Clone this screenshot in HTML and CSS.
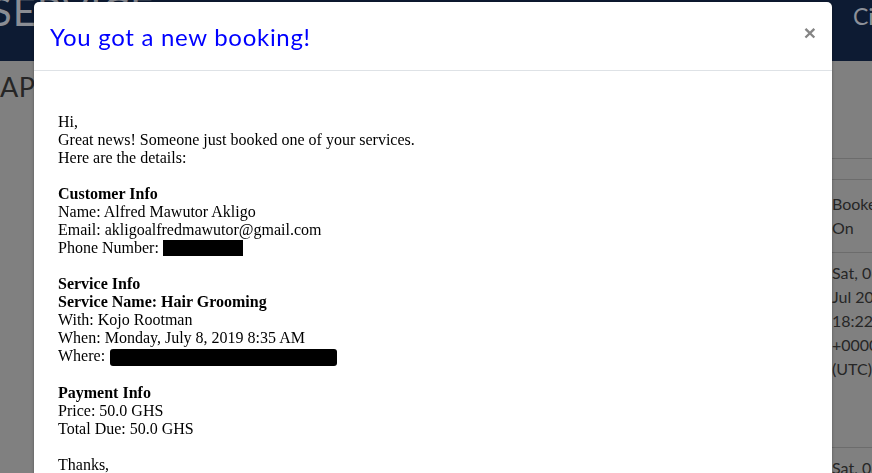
FILE: index.html
```html
<!DOCTYPE html>
<html lang="en">
<head>
<meta charset="utf-8">
<title>Bookings</title>
<link rel="stylesheet" href="styles.css">
</head>
<body>
<div class="page">
  <nav class="navbar">
    <span class="brand">SERVICE</span>
    <span class="nav-link">Cities</span>
  </nav>
  <div class="content">
    <div class="left">
      <h2 class="page-title">APPOINTMENTS</h2>
    </div>
    <div class="right">
      <div class="row row-empty"></div>
      <div class="row row-head">Booked On</div>
      <div class="row row-cell">Sat, 06 Jul 2019 18:22:10 +0000 (UTC)</div>
      <div class="row row-cell">Sat, 06 Jul 2019</div>
    </div>
  </div>
</div>

<div class="modal">
  <div class="modal-header">
    <h5 class="modal-title">You got a new booking!</h5>
    <span class="close">&times;</span>
  </div>
  <div class="modal-body">
    <div class="email">
      <p>Hi,<br>Great news! Someone just booked one of your services.<br>Here are the details:</p>
      <p><b>Customer Info</b><br>Name: Alfred Mawutor Akligo<br>Email: akligoalfredmawutor@gmail.com<br>Phone Number: <span class="redact redact-phone"></span></p>
      <p><b>Service Info</b><br><b>Service Name: Hair Grooming</b><br>With: Kojo Rootman<br>When: Monday, July 8, 2019 8:35 AM<br>Where: <span class="redact redact-where"></span></p>
      <p><b>Payment Info</b><br>Price: 50.0 GHS<br>Total Due: 50.0 GHS</p>
      <p>Thanks,<br>The Service Team</p>
    </div>
  </div>
</div>
</body>
</html>
```

FILE: styles.css
```css
html, body {
  margin: 0;
  padding: 0;
  height: 100%;
  overflow: hidden;
}
body {
  background: #808080;
  font-family: "Lato", "Noto Sans", sans-serif;
}
.page {
  display: flex;
  flex-direction: column;
}
.navbar {
  height: 61px;
  background: #0d1b33;
  display: flex;
  justify-content: space-between;
  align-items: flex-start;
  overflow: hidden;
}
.brand {
  font-size: 40px;
  line-height: 40px;
  color: #8a8d94;
  margin-top: -9px;
  margin-left: -10px;
  letter-spacing: 1px;
}
.nav-link {
  font-size: 23px;
  line-height: 28px;
  color: #8c9099;
  margin-top: 2px;
  width: 19px;
  overflow: hidden;
  white-space: nowrap;
}
.content {
  display: flex;
}
.left {
  width: 832px;
  flex: none;
}
.page-title {
  margin: 10px 0 0 0;
  font-size: 27px;
  font-weight: 400;
  line-height: 32px;
  color: #262626;
  letter-spacing: 0.5px;
}
.right {
  flex: 1;
  overflow: hidden;
  padding-top: 97px;
}
.row {
  border-top: 1px solid #6c6c6c;
  color: #262626;
  font-size: 16px;
  line-height: 24px;
  white-space: normal;
  width: 68px;
}
.row-empty {
  height: 20px;
}
.row-head {
  padding: 12px 0 12px 0;
  height: 48px;
}
.row-cell {
  padding: 8px 0;
  height: 178px;
}

.modal {
  position: fixed;
  top: 2px;
  left: 34px;
  width: 798px;
  height: 700px;
  background: #fff;
  border-radius: 5px;
  box-shadow: 0 0 3px rgba(0, 0, 0, 0.35);
  display: flex;
  flex-direction: column;
}
.modal-header {
  display: flex;
  justify-content: space-between;
  align-items: flex-start;
  padding: 16px 16px 15px 16px;
  border-bottom: 1px solid #dee2e6;
}
.modal-title {
  margin: 0;
  font-size: 24px;
  font-weight: 400;
  line-height: 37px;
  color: #0000ff;
  letter-spacing: 0.7px;
}
.close {
  font-family: "Liberation Sans", Arial, sans-serif;
  font-size: 21px;
  font-weight: 700;
  line-height: 26px;
  color: #858585;
  margin-right: 0;
  margin-top: 2px;
}
.modal-body {
  padding: 42px 24px 16px 24px;
}
.email {
  font-family: "Liberation Serif", "Times New Roman", serif;
  font-size: 16px;
  line-height: 18px;
  color: #000;
}
.email p {
  margin: 0 0 18px 0;
}
.redact {
  display: inline-block;
  background: #000;
  vertical-align: -3px;
}
.redact-phone {
  width: 80px;
  height: 16px;
}
.redact-where {
  width: 227px;
  height: 17px;
  border-radius: 3px;
  margin-left: 1px;
  vertical-align: -5px;
}
```
